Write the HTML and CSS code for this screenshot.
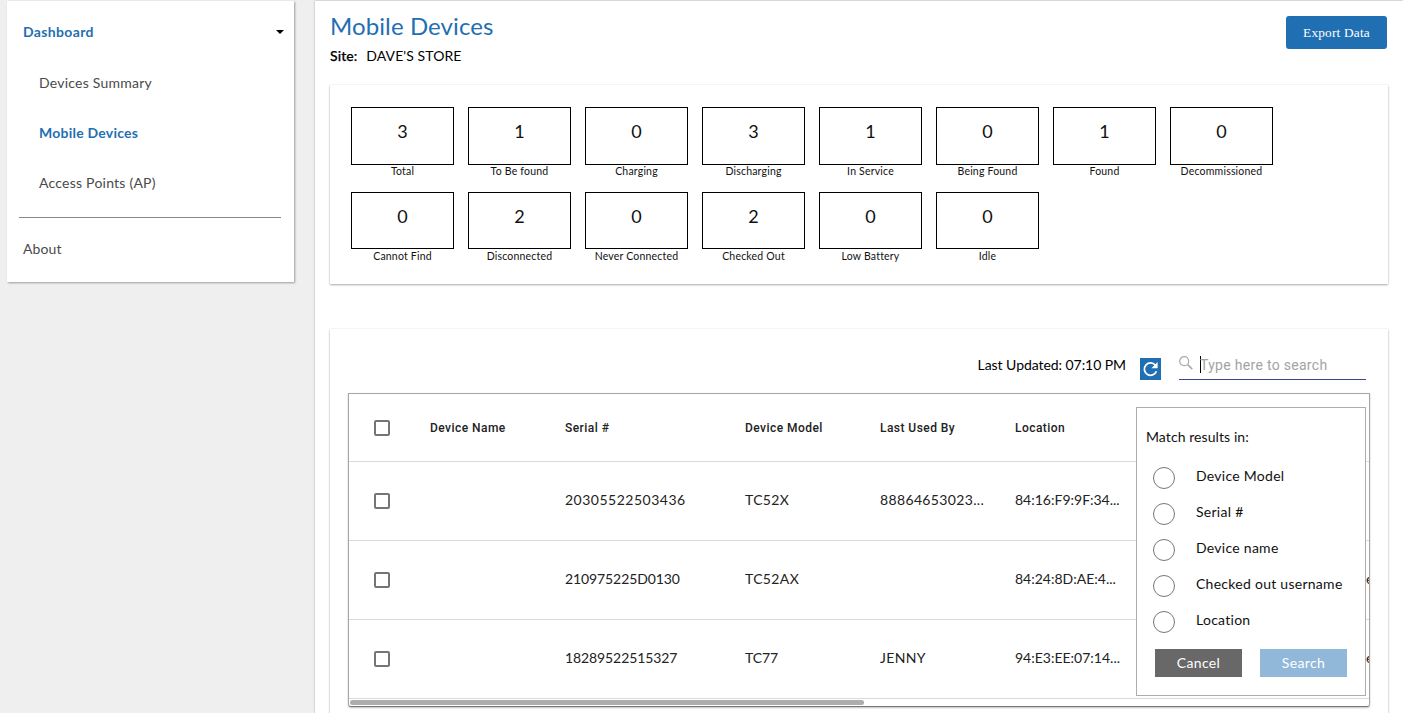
FILE: index.html
```
<!DOCTYPE html>
<html lang="en">
<head>
<meta charset="utf-8">
<title>Mobile Devices</title>
<link rel="stylesheet" href="styles.css">
</head>
<body>
<div class="layout">
  <nav class="sidebar">
    <a class="nav-root active"><span>Dashboard</span><span class="caret"></span></a>
    <a class="nav-sub"><span>Devices Summary</span></a>
    <a class="nav-sub active"><span>Mobile Devices</span></a>
    <a class="nav-sub"><span>Access Points (AP)</span></a>
    <hr class="divider">
    <a class="nav-about"><span>About</span></a>
  </nav>
  <main class="main">
    <header class="page-head">
      <div>
        <h1>Mobile Devices</h1>
        <p class="site"><b>Site:</b><span>DAVE'S STORE</span></p>
      </div>
      <button class="export">Export Data</button>
    </header>
    <section class="card stats">
      <div class="stat"><div class="num">3</div><span>Total</span></div>
      <div class="stat"><div class="num">1</div><span>To Be found</span></div>
      <div class="stat"><div class="num">0</div><span>Charging</span></div>
      <div class="stat"><div class="num">3</div><span>Discharging</span></div>
      <div class="stat"><div class="num">1</div><span>In Service</span></div>
      <div class="stat"><div class="num">0</div><span>Being Found</span></div>
      <div class="stat"><div class="num">1</div><span>Found</span></div>
      <div class="stat"><div class="num">0</div><span>Decommissioned</span></div>
      <div class="stat low"><div class="num">0</div><span>Cannot Find</span></div>
      <div class="stat low"><div class="num">2</div><span>Disconnected</span></div>
      <div class="stat low"><div class="num">0</div><span>Never Connected</span></div>
      <div class="stat low"><div class="num">2</div><span>Checked Out</span></div>
      <div class="stat low"><div class="num">0</div><span>Low Battery</span></div>
      <div class="stat low"><div class="num">0</div><span>Idle</span></div>
    </section>
    <section class="card list">
      <div class="toolbar">
        <span class="updated">Last Updated: 07:10 PM</span>
        <span class="refresh"><svg width="21" height="22" viewBox="0 0 21 22"><path d="M15.4 7.2A6.2 6.2 0 1 0 16.4 13.2" fill="none" stroke="#fff" stroke-width="1.8"/><path d="M17.6 4v6.2h-6.2z" fill="#fff"/></svg></span>
        <div class="search">
          <svg width="14" height="14" viewBox="0 0 14 14"><circle cx="5.2" cy="5.2" r="4.5" fill="none" stroke="#a8a8a8" stroke-width="1.2"/><path d="M8.6 8.6l4.7 4.5" stroke="#a8a8a8" stroke-width="1.5"/></svg>
          <span class="cursor"></span><span class="placeholder">Type here to search</span>
        </div>
      </div>
      <div class="table">
        <div class="row head"><span class="check"></span><span>Device Name</span><span>Serial #</span><span>Device Model</span><span>Last Used By</span><span>Location</span></div>
        <div class="row"><span class="check"></span><span></span><span class="wide">20305522503436</span><span class="roomy">TC52X</span><span class="roomy">88864653023...</span><span>84:16:F9:9F:34...</span></div>
        <div class="row"><span class="check"></span><span></span><span class="snug">210975225D0130</span><span class="roomy">TC52AX</span><span></span><span>84:24:8D:AE:4...</span><span>e</span></div>
        <div class="row"><span class="check"></span><span></span><span class="snug">18289522515327</span><span class="snug">TC77</span><span class="roomy">JENNY</span><span>94:E3:EE:07:14...</span><span>e</span></div>
        <div class="scroll"><div class="thumb"></div></div>
      </div>
      <div class="popup">
        <p class="match">Match results in:</p>
        <label class="option"><i></i><span>Device Model</span></label>
        <label class="option"><i></i><span>Serial #</span></label>
        <label class="option"><i></i><span>Device name</span></label>
        <label class="option"><i></i><span>Checked out username</span></label>
        <label class="option"><i></i><span>Location</span></label>
        <div class="actions"><button class="cancel">Cancel</button><button class="go">Search</button></div>
      </div>
    </section>
  </main>
</div>
</body>
</html>
```
FILE: styles.css
```
* { box-sizing: border-box; }
body {
  margin: 0;
  height: 713px;
  overflow: hidden;
  background: #efefef;
  font: 14px/20px Lato, sans-serif;
  color: #111;
}
.layout { display: flex; align-items: flex-start; height: 713px; padding: 1px 0 0 7px; }
.sidebar {
  flex: none;
  width: 287px;
  height: 281px;
  padding: 6px 12px 0;
  background: #fff;
  box-shadow: 1px 1px 2px rgba(0,0,0,.35);
  color: #4a4a4a;
  letter-spacing: .23px;
}
.sidebar a { display: flex; align-items: center; height: 50px; }
.sidebar .active { color: #1f6fb2; font-weight: 700; }
.nav-root { padding-left: 4px; }
.sidebar .nav-root { height: 51px; padding-bottom: 1px; letter-spacing: .35px; }
.nav-sub { padding-left: 20px; }
.sidebar .nav-about { padding-left: 4px; margin-top: 6px; letter-spacing: .1px; }
.caret { margin-left: auto; margin-right: -2px; border: 4px solid transparent; border-top: 4px solid #000; border-bottom: 0; }
.divider { margin: 9px 0 0; width: 262px; border: 0; border-top: 1px solid #888; }
.main {
  flex: none;
  width: 1088px;
  height: 712px;
  overflow: hidden;
  margin-left: 21px;
  padding-left: 15px;
  background: #fff;
  box-shadow: 0 0 2px rgba(0,0,0,.3);
}
.page-head { display: flex; justify-content: space-between; width: 1057px; height: 84px; }
h1 { margin: 10px 0 0; font-size: 24px; line-height: 30px; font-weight: 400; color: #1f6fb2; letter-spacing: .1px; }
.site { margin: 5px 0 0; display: flex; gap: 9px; color: #000; letter-spacing: .08px; }
.site b { font-weight: 500; -webkit-text-stroke: .25px #000; }
.export {
  width: 101px; height: 33px; margin-top: 15px; padding: 0;
  border: 0; border-radius: 3px; background: #1f6fb2; color: #fff;
  font: 13.3px "Liberation Serif", serif; letter-spacing: .2px;
}
.card { width: 1058px; background: #fff; box-shadow: 0 1px 2px rgba(0,0,0,.32), 0 0 1px rgba(0,0,0,.12); }
.stats {
  height: 199px; padding: 22px 21px 0;
  display: grid; grid-template-columns: repeat(8, 103px); grid-template-rows: 85px 85px; column-gap: 14px;
}
.stat { font-size: 10.5px; line-height: 13px; text-align: center; }
.stat span { white-space: nowrap; letter-spacing: .2px; }
.num { height: 58px; border: 1px solid #000; font-size: 18px; line-height: 47px; }
.low .num { height: 57px; line-height: 46px; margin-bottom: 1px; }
.list { position: relative; height: 420px; margin-top: 45px; padding: 0 18px; }
.toolbar { display: flex; justify-content: flex-end; height: 64px; padding-right: 4px; }
.updated { margin: 26px 14px 0 0; color: #000; letter-spacing: -.06px; }
.refresh { width: 21px; height: 22px; margin: 29px 18px 0 0; background: #1f6fb2; }
.refresh svg, .search svg { display: block; }
.search { width: 187px; height: 28px; margin-top: 23px; padding-top: 4px; display: flex; border-bottom: 1px solid #3a478f; }
.cursor { width: 1px; height: 17px; margin-left: 7px; background: #000; }
.placeholder { margin-left: -1px; font: 14px/18px Roboto, sans-serif; color: #a3a3a3; letter-spacing: .3px; }
.table { width: 1022px; height: 314px; overflow: hidden; border: 1px solid #a6a6a6; border-bottom-color: #777; border-radius: 0 0 3px 3px; box-shadow: 0 1px 2px rgba(0,0,0,.25); }
.row {
  display: grid; grid-template-columns: 81px 135px 180px 135px 135px 351px 40px;
  align-items: center; height: 79px; padding-bottom: 2px; border-bottom: 1px solid #dadada; color: #222; white-space: nowrap;
}
.row > span { justify-self: start; }
.wide { letter-spacing: .5px; }
.roomy { letter-spacing: .35px; }
.snug { letter-spacing: -.1px; }
.row.head { height: 68px; padding-bottom: 0; font: 500 12px/16px Roboto, sans-serif; letter-spacing: .45px; }
.row .check { width: 16px; height: 16px; margin: 2px 0 0 25px; border: 2px solid #757575; border-radius: 2px; }
.row.head .check { margin-top: 0; }
.scroll { height: 7px; padding: 1px; }
.thumb { width: 514px; height: 5px; border-radius: 3px; background: #adadad; }
.popup {
  position: absolute; left: 806px; top: 78px; width: 230px; height: 289px;
  border: 1px solid #adadad; background: #fff; color: #111;
}
.match { margin: 19px 0 12px 9px; letter-spacing: .08px; }
.option { display: flex; align-items: center; height: 36px; padding-left: 16px; letter-spacing: .27px; }
.option i { width: 22px; height: 22px; border: 1px solid #777; border-radius: 50%; margin: 1px 21px 0 0; }
.option span { padding-bottom: 2px; }
.actions { display: flex; gap: 18px; padding: 10px 0 0 18px; }
.actions button { width: 87px; height: 28px; padding: 0 0 2px; border: 0; color: #fff; font: 14px Lato, sans-serif; letter-spacing: .35px; }
.actions .cancel { background: #686868; }
.actions .go { background: #91b7d9; }
```
